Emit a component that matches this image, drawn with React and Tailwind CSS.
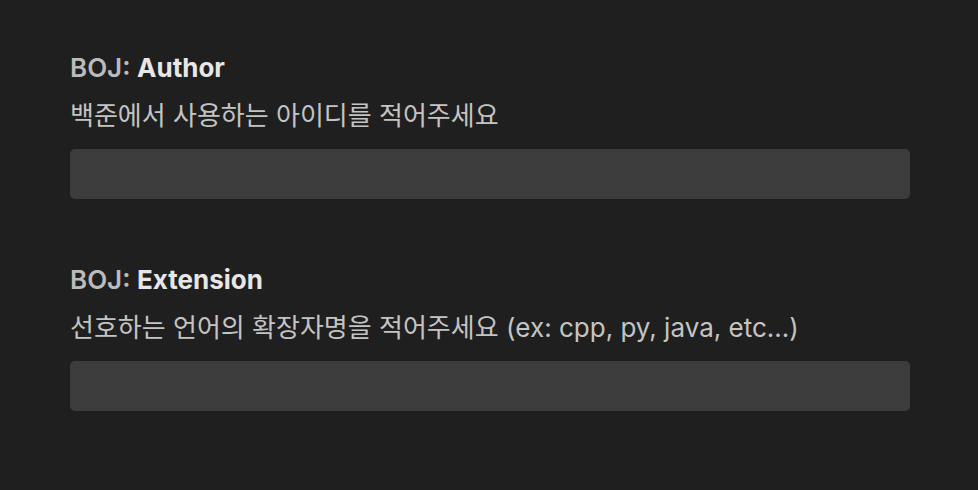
import React from 'react';

const settings = [
  { category: 'BOJ: ', name: 'Author', description: '백준에서 사용하는 아이디를 적어주세요' },
  { category: 'BOJ: ', name: 'Extension', description: '선호하는 언어의 확장자명을 적어주세요 (ex: cpp, py, java, etc...)' },
];

const SettingItem = ({ category, name, description }) => (
  <div className="flex flex-col">
    <div className="text-[26px] leading-[36px] font-semibold">
      <span className="text-[#bbbbbb]">{category}</span>
      <span className="text-[#e7e7e7] font-bold">{name}</span>
    </div>
    <p className="mt-3 text-[26px] leading-[36px] text-[#c4c4c4]">{description}</p>
    <input
      type="text"
      className="mt-[15px] h-[50px] w-[840px] rounded-[5px] bg-[#3c3c3c] outline-none px-3 text-[26px] text-[#cccccc]"
    />
  </div>
);

export default function App() {
  return (
    <div
      className="w-[978px] h-[490px] bg-[#1f1f1f] pl-[70px] pt-[50px] flex flex-col gap-[63px] overflow-hidden"
      style={{ fontFamily: 'Inter, "Noto Sans CJK KR", sans-serif' }}
    >
      {settings.map((s) => (
        <SettingItem key={s.name} {...s} />
      ))}
    </div>
  );
}
